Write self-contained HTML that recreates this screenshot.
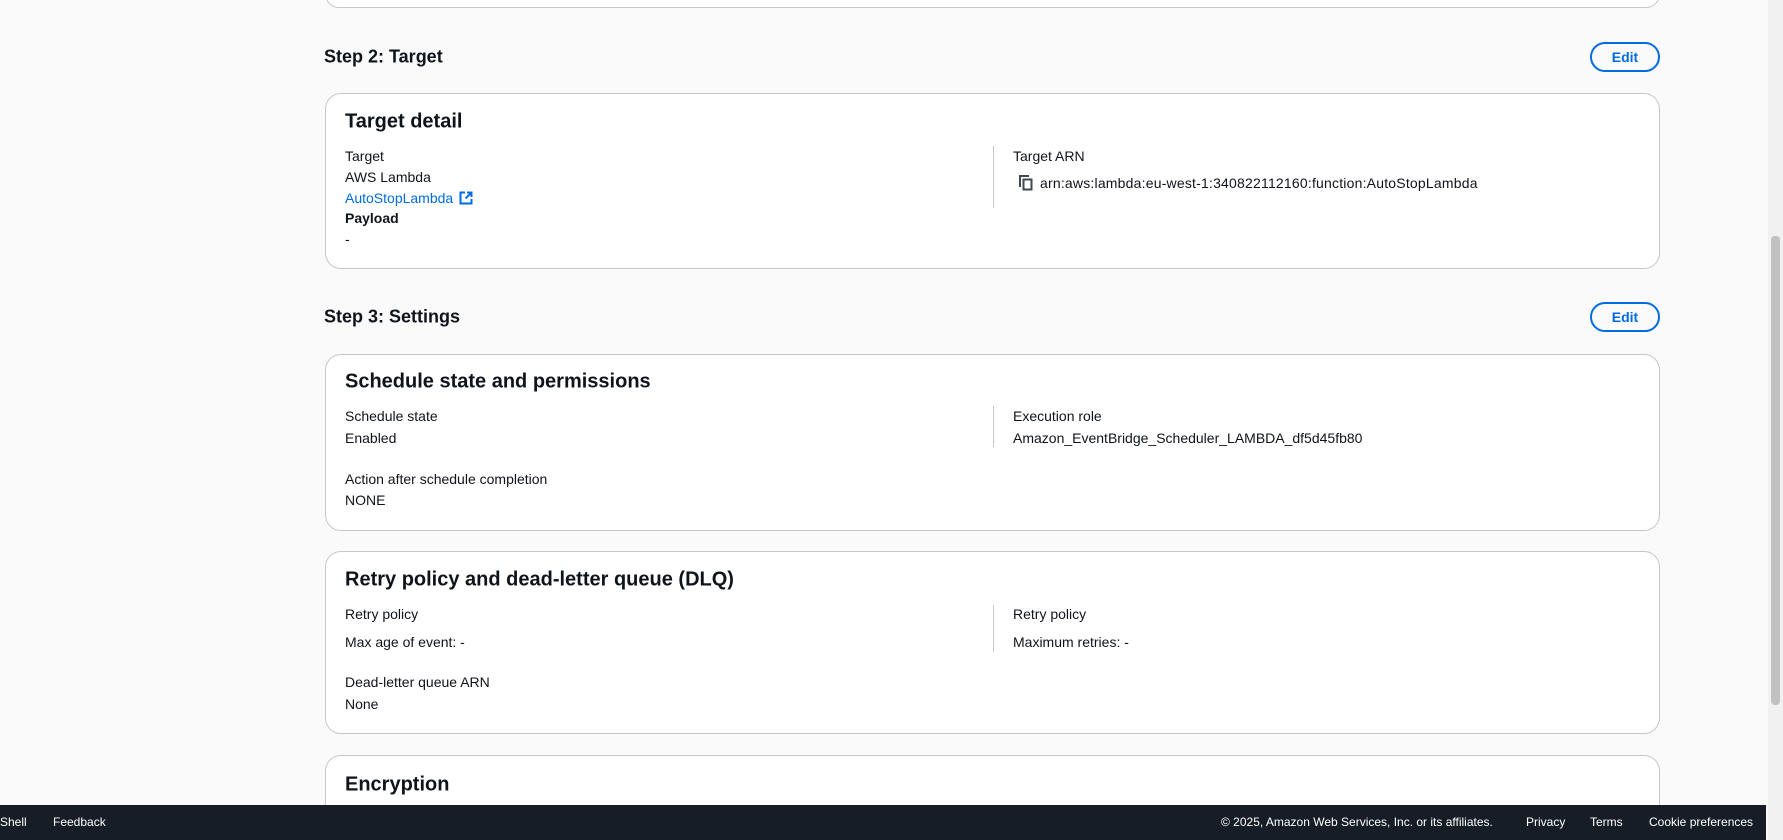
<!DOCTYPE html>
<html style="width:1783px;height:840px;overflow:hidden"><head><meta charset="utf-8"><style>
*{box-sizing:border-box;margin:0;padding:0}
body{width:1783px;height:840px;overflow:hidden;background:#fafafa;font-family:"Liberation Sans",sans-serif;color:#0f141a;position:relative;font-size:14px}
.a{position:absolute;white-space:nowrap}
.card{position:absolute;left:325px;width:1335px;background:#fff;border:1px solid #c6c6cd;border-radius:16px}
.h2{font-size:18px;font-weight:bold}
.h3{font-size:20px;font-weight:bold}
.btn{position:absolute;left:1590px;width:70px;height:30px;border:2px solid #006ce0;border-radius:20px;color:#006ce0;font-weight:bold;font-size:14px;text-align:center;line-height:26px}
.div{position:absolute;left:993px;width:1px;background:#c6c6cd}
.t{position:absolute;white-space:nowrap;transform:translateY(-50%)}
.foot{position:absolute;left:0;top:805px;width:1766px;height:35px;background:#161d26;color:#fff;font-size:12px}
</style></head><body>
<div class="card" style="top:-20px;height:28px"></div>

<div class="t h2" style="left:324px;top:57px">Step 2: Target</div>
<div class="btn" style="top:42px">Edit</div>
<div class="card" style="top:93px;height:176px"></div>
<div class="t h3" style="left:345px;top:122px">Target detail</div>
<div class="t" style="left:345px;top:156px">Target</div>
<div class="t" style="left:345px;top:177px">AWS Lambda</div>
<div class="t" style="left:345px;top:198px;color:#006ce0">AutoStopLambda <svg width="14" height="14" viewBox="0 0 14 14" style="vertical-align:-2px;margin-left:2px"><path d="M6 1.5H1.5v11h11V8" fill="none" stroke="#006ce0" stroke-width="2"/><path d="M8 1.5h4.5V6M12.5 1.5L6.5 7.5" fill="none" stroke="#006ce0" stroke-width="2"/></svg></div>
<div class="t" style="left:345px;top:218px;font-weight:bold">Payload</div>
<div class="t" style="left:345px;top:239px">-</div>
<div class="div" style="top:146px;height:62px"></div>
<div class="t" style="left:1013px;top:156px">Target ARN</div>
<svg class="a" style="left:1019px;top:175px" width="14" height="16" viewBox="0 0 14 16"><path d="M1 12V1h9" fill="none" stroke="#424650" stroke-width="2"/><rect x="4.5" y="4.5" width="8" height="10" fill="none" stroke="#424650" stroke-width="2"/></svg>
<div class="t" style="left:1040px;top:183px;letter-spacing:0.2px">arn:aws:lambda:eu-west-1:340822112160:function:AutoStopLambda</div>

<div class="t h2" style="left:324px;top:317px">Step 3: Settings</div>
<div class="btn" style="top:302px">Edit</div>
<div class="card" style="top:354px;height:177px"></div>
<div class="t h3" style="left:345px;top:382px">Schedule state and permissions</div>
<div class="t" style="left:345px;top:416px">Schedule state</div>
<div class="t" style="left:345px;top:438px">Enabled</div>
<div class="t" style="left:345px;top:479px">Action after schedule completion</div>
<div class="t" style="left:345px;top:500px">NONE</div>
<div class="div" style="top:406px;height:41px"></div>
<div class="t" style="left:1013px;top:416px">Execution role</div>
<div class="t" style="left:1013px;top:438px">Amazon_EventBridge_Scheduler_LAMBDA_df5d45fb80</div>

<div class="card" style="top:551px;height:183px"></div>
<div class="t h3" style="left:345px;top:580px">Retry policy and dead-letter queue (DLQ)</div>
<div class="t" style="left:345px;top:614px">Retry policy</div>
<div class="t" style="left:345px;top:642px">Max age of event: -</div>
<div class="t" style="left:345px;top:682px">Dead-letter queue ARN</div>
<div class="t" style="left:345px;top:704px">None</div>
<div class="div" style="top:605px;height:47px"></div>
<div class="t" style="left:1013px;top:614px">Retry policy</div>
<div class="t" style="left:1013px;top:642px">Maximum retries: -</div>

<div class="card" style="top:755px;height:80px;border-bottom:none;border-radius:16px 16px 0 0"></div>
<div class="t h3" style="left:345px;top:785px">Encryption</div>

<div class="foot">
<div class="t" style="left:0;top:17px">Shell</div>
<div class="t" style="left:53px;top:17px">Feedback</div>
<div class="t" style="left:1221px;top:17px">© 2025, Amazon Web Services, Inc. or its affiliates.</div>
<div class="t" style="left:1526px;top:17px">Privacy</div>
<div class="t" style="left:1590px;top:17px">Terms</div>
<div class="t" style="left:1649px;top:17px">Cookie preferences</div>
</div>
<div class="a" style="left:1768px;top:0;width:15px;height:840px;background:#f1f1f1"></div>
<div class="a" style="left:1771px;top:236px;width:9px;height:469px;background:#c1c1c1;border-radius:4px"></div>
</body></html>
